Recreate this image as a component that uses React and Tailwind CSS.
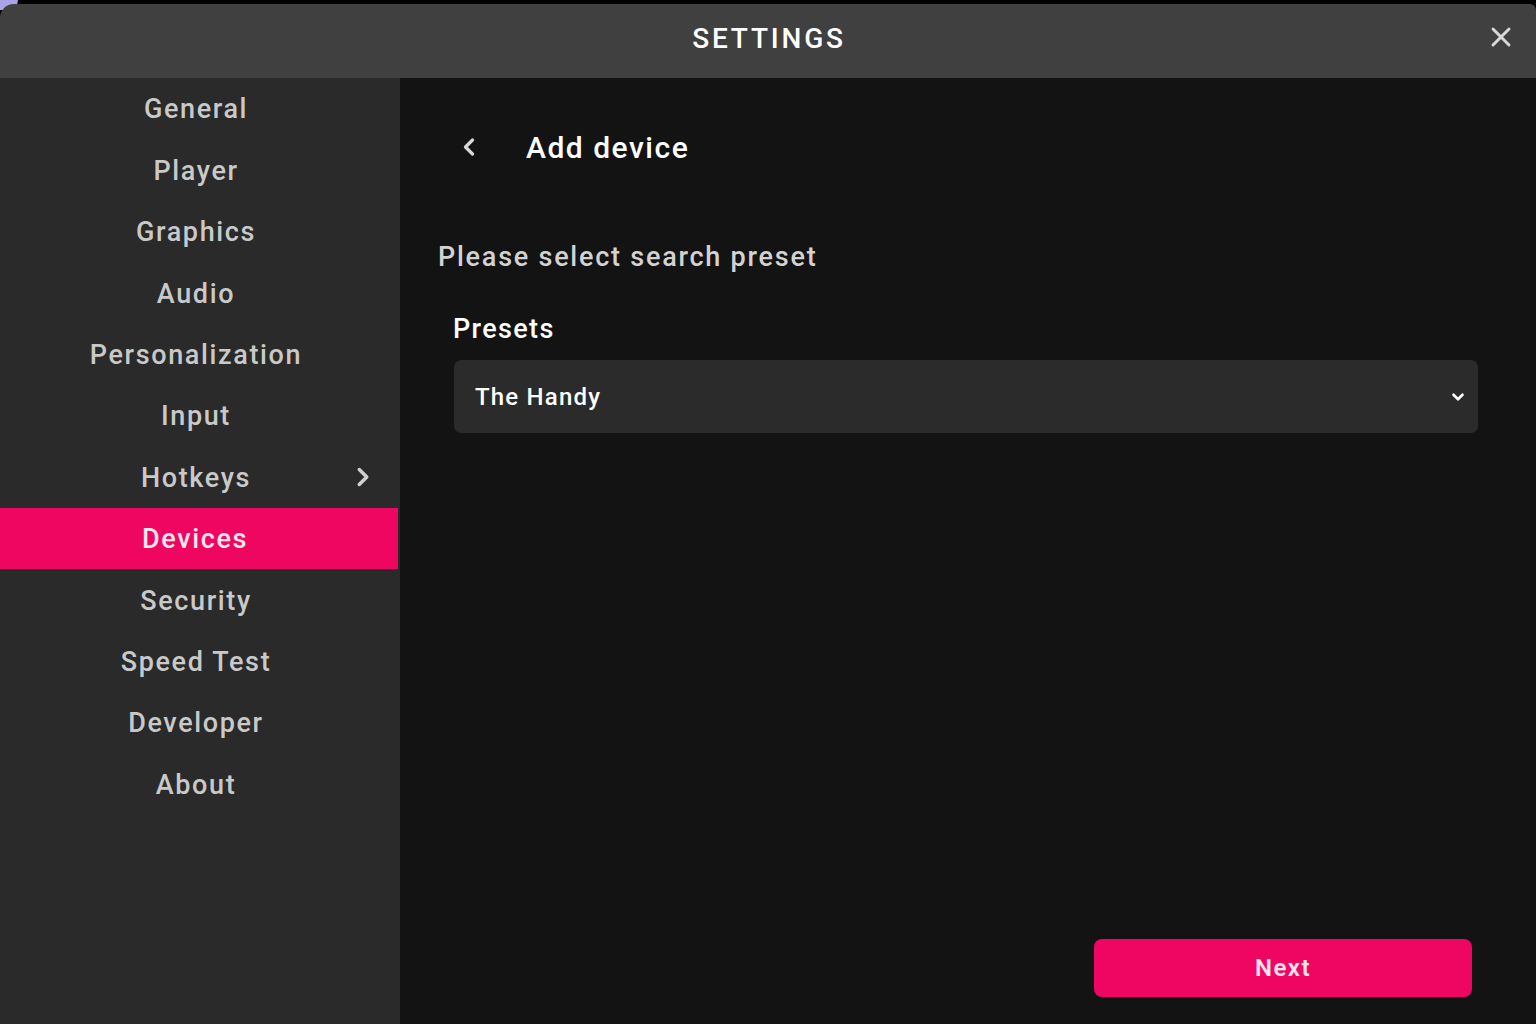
import React from 'react';
import { ChevronLeft, ChevronRight, ChevronDown, X } from 'lucide-react';

const items = ['General', 'Player', 'Graphics', 'Audio', 'Personalization', 'Input', 'Hotkeys', 'Devices', 'Security', 'Speed Test', 'Developer', 'About'];

const App = () => {
    return (
        <div className="w-[1536px] h-[1024px] bg-black overflow-hidden flex flex-col pt-[4px] relative" style={{ fontFamily: 'Roboto, "Liberation Sans", sans-serif' }}>
            {/* top-left corner glow */}
            <div className="absolute -left-[10px] -top-[10px] w-[28px] h-[20px] rounded-full bg-[#a9a3e6]"></div>

            <div className="relative flex-1 flex flex-col rounded-tl-[14px] rounded-tr-[6px] overflow-hidden">
                {/* Header */}
                <div className="h-[74px] bg-[#404040] flex items-center justify-center relative shrink-0">
                    <span className="text-[28px] font-medium tracking-[0.1em] text-white -mt-[4px] pl-[2px]">SETTINGS</span>
                    <button className="absolute right-[19px] top-[17px] text-[#d8d8d8]">
                        <X size={32} strokeWidth={2.2} />
                    </button>
                </div>

                <div className="flex flex-1 min-h-0">
                    {/* Sidebar */}
                    <div className="w-[400px] bg-[#2a2a2a] flex flex-col shrink-0">
                        {items.map((item) => (
                            <div
                                key={item}
                                className={`h-[61.4px] flex items-center justify-center relative text-[27px] font-medium tracking-[0.06em] ${item === 'Devices' ? 'bg-[#ef0660] text-[#fbe6ee] mr-[2px]' : 'text-[#c9c9c9]'}`}
                            >
                                <span className="-ml-[8px] mt-[2px]">{item}</span>
                                {item === 'Hotkeys' && (
                                    <ChevronRight size={30} strokeWidth={2.8} className="absolute left-[348px] text-[#d0d0d0]" />
                                )}
                            </div>
                        ))}
                    </div>

                    {/* Main */}
                    <div className="flex-1 bg-[#131313] flex flex-col pl-[38px] pr-[58px] relative">
                        <div className="flex items-center h-[42px] mt-[48px]">
                            <ChevronLeft size={28} strokeWidth={2.8} className="text-[#d8d8d8] ml-[17px]" />
                            <span className="ml-[43px] text-[30px] font-medium tracking-[0.05em] text-white">Add device</span>
                        </div>

                        <div className="mt-[73px] text-[27px] font-medium tracking-[0.065em] text-[#d2d2d2] leading-[32px]">
                            Please select search preset
                        </div>

                        <div className="mt-[40px] ml-[15px] text-[27px] font-medium tracking-[0.05em] text-white leading-[32px]">
                            Presets
                        </div>

                        <div className="mt-[15px] ml-[16px] h-[73px] bg-[#2b2b2b] rounded-[7px] flex items-center justify-between pl-[21px] pr-[18px]">
                            <span className="text-[24px] font-medium tracking-[0.05em] text-white">The Handy</span>
                            <ChevronDown size={18} strokeWidth={3.5} className="text-white -mr-[7px]" />
                        </div>

                        <div className="flex-1"></div>

                        <div className="flex justify-end pb-[27px] pr-[6px]">
                            <button className="w-[378px] h-[58px] bg-[#ee0662] rounded-[8px] text-[24px] font-semibold tracking-[0.06em] text-[#fde3ec]">
                                Next
                            </button>
                        </div>
                    </div>
                </div>
            </div>
        </div>
    );
};

export default App;
